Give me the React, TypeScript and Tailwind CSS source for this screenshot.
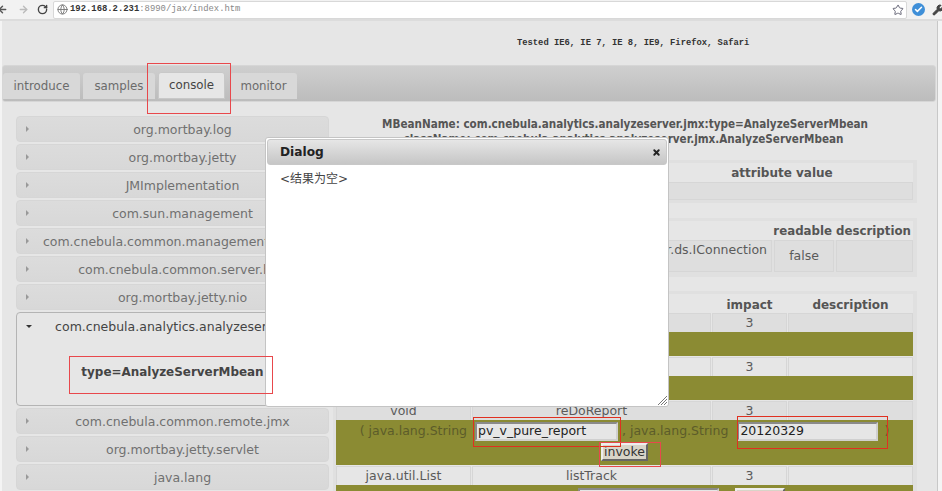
import { ArrowLeft, ArrowRight, Globe, RotateCw, Star, Wrench, X, Check } from 'lucide-react';

const font = { fontFamily: '"DejaVu Sans", "Noto Sans CJK SC", sans-serif' };
const mono = { fontFamily: '"Liberation Mono", monospace' };
const condensed = { fontFamily: '"DejaVu Sans Condensed", "DejaVu Sans", sans-serif' };

const topItems = [
  'org.mortbay.log',
  'org.mortbay.jetty',
  'JMImplementation',
  'com.sun.management',
  'com.cnebula.common.management.monitor',
  'com.cnebula.common.server.hub',
  'org.mortbay.jetty.nio',
];
const bottomItems = ['com.cnebula.common.remote.jmx', 'org.mortbay.jetty.servlet', 'java.lang'];

function Item({ label }: { label: string }) {
  return (
    <div className="flex h-[26px] shrink-0 items-center rounded-[4px] border border-[#d6d6d6] bg-gradient-to-b from-[#dcdcdc] to-[#d8d8d8] pl-[9px] text-[#707070]">
      <span className="h-0 w-0 border-y-[3px] border-l-[3px] border-y-transparent border-l-[#999]" />
      <span className="flex-1 whitespace-nowrap pt-[2px] pl-[8px] text-center">{label}</span>
    </div>
  );
}

function Cell({ children, className = '' }: { children?: React.ReactNode; className?: string }) {
  return (
    <div className={`flex items-center justify-center border border-[#d6d6d6] whitespace-nowrap text-[#5a5a5a] ${className}`}>
      {children}
    </div>
  );
}

function OpRow({ type, name, dark }: { type: string; name: string; dark?: boolean }) {
  const bg = dark ? 'bg-[#dedede]' : 'bg-[#e6e6e6]';
  return (
    <div className="grid h-[18px] grid-cols-[135px_239px_75px_125px] gap-x-[1px]">
      <Cell className={bg}>{type}</Cell>
      <Cell className={bg}>{name}</Cell>
      <Cell className={bg}>3</Cell>
      <Cell className={bg} />
    </div>
  );
}

function Field({ value, className }: { value: string; className: string }) {
  return (
    <div className={`flex h-[19px] items-center border-2 border-[#8a8a8a] border-r-[#d0d0d0] border-b-[#d0d0d0] bg-[#e6e6e6] pl-[1px] text-[#222] ${className}`}>
      {value}
    </div>
  );
}

export default function App() {
  return (
    <div className="relative flex h-[491px] w-[942px] flex-col overflow-hidden bg-[#f4f4f4] text-[12.5px]" style={font}>
      <header className="flex h-[21px] shrink-0 items-center border-b-2 border-[#dcdcdc] bg-[#f2f2f2]">
        <ArrowLeft className="ml-[-3px] h-[11px] w-[11px] shrink-0 text-[#555]" strokeWidth={3} />
        <ArrowRight className="ml-[10px] h-[11px] w-[11px] shrink-0 text-[#bbb]" strokeWidth={3} />
        <RotateCw className="ml-[8px] h-[11px] w-[11px] shrink-0 text-[#444]" strokeWidth={3} />
        <div className="ml-[5px] flex h-[18px] w-[854px] shrink-0 items-center rounded-[2px] border border-[#d8d8d8] bg-white pl-[3px]">
          <Globe className="h-[11px] w-[11px] text-[#777]" />
          <span className="ml-[2px] text-[8.9px] font-bold text-[#333]" style={mono}>
            192.168.2.231<span className="font-normal text-[#888]">:8990/jax/index.htm</span>
          </span>
          <Star className="ml-auto mr-[2px] h-[12px] w-[12px] text-[#667]" />
        </div>
        <div className="ml-[5px] flex h-[13px] w-[13px] shrink-0 items-center justify-center rounded-full bg-[#3f8fd8]">
          <Check className="h-[9px] w-[9px] text-white" strokeWidth={4} />
        </div>
        <Wrench className="ml-[7px] h-[12px] w-[12px] shrink-0 fill-[#444] text-[#444]" />
      </header>

      <div className="flex min-h-0 flex-1">
        <main className="ml-[2px] mr-[4px] flex min-w-0 flex-1 flex-col bg-[#e6e6e6]">
          <p className="h-[44px] shrink-0 pt-[16px] pl-[515px] text-[8.8px] font-bold leading-[12px] text-[#333]" style={mono}>
            Tested IE6, IE 7, IE 8, IE9, Firefox, Safari
          </p>

          <nav className="mr-[2px] flex h-[37px] shrink-0 items-end gap-[3px] rounded-[3px] border border-[#d6d6d6] bg-gradient-to-b from-[#cfcfcf] to-[#bcbcbc] pb-[2px] text-[11.8px] text-[#6b6b6b]">
            <div className="flex h-[26px] w-[77px] items-center justify-center rounded-t-[3px] bg-[#d8d8d8] pt-[1px]">introduce</div>
            <div className="flex h-[26px] w-[72px] items-center justify-center rounded-t-[3px] bg-[#d8d8d8] pt-[1px]">samples</div>
            <div className="flex h-[27px] w-[67px] items-center justify-center rounded-t-[3px] border border-[#c8c8c8] bg-[#e6e6e6] pt-[1px] text-[#444]">console</div>
            <div className="ml-[2px] flex h-[26px] w-[67px] items-center justify-center rounded-t-[3px] bg-[#d8d8d8] pt-[1px]">monitor</div>
          </nav>

          <div className="flex min-h-0 flex-1 gap-[4px] overflow-hidden pt-[14px] pl-[14px]">
            <aside className="flex w-[313px] shrink-0 flex-col gap-[2px]">
              {topItems.map((item) => (
                <Item key={item} label={item} />
              ))}
              <div className="flex h-[94px] shrink-0 flex-col rounded-[4px] border border-[#b4b4b4] bg-[#e6e6e6] text-[#444]">
                <div className="flex h-[26px] items-center pl-[9px]">
                  <span className="h-0 w-0 border-x-[3px] border-t-[3px] border-x-transparent border-t-[#333]" />
                  <span className="flex-1 whitespace-nowrap pt-[2px] pl-[8px] text-center">com.cnebula.analytics.analyzeserver.jmx</span>
                </div>
                <div className="pt-[25px] text-center text-[11.95px] font-bold">type=AnalyzeServerMbean</div>
              </div>
              {bottomItems.map((item) => (
                <Item key={item} label={item} />
              ))}
            </aside>

            <section className="flex w-[584px] shrink-0 flex-col">
              <div className="pt-[1px] text-center text-[11.6px] font-bold leading-[15px] text-[#555]" style={condensed}>
                <div>MBeanName: com.cnebula.analytics.analyzeserver.jmx:type=AnalyzeServerMbean</div>
                <div className="pr-[3px]">className: com.cnebula.analytics.analyzeserver.jmx.AnalyzeServerMbean</div>
              </div>

              <div className="mt-[13px] h-[43px] shrink-0 bg-[#e0e0e0] pt-[3px] pr-[4px] pl-[3px]">
                <div className="flex h-[19px] items-center bg-[#e6e6e6] font-bold text-[#555]">
                  <span className="ml-[315px] flex-1 text-center text-[12px]">attribute value</span>
                </div>
                <div className="h-[18px] border border-[#d6d6d6] bg-[#dedede]" />
              </div>

              <div className="mt-[15px] h-[59px] shrink-0 bg-[#e0e0e0] pt-[3px] pr-[4px] pl-[3px]">
                <div className="flex h-[19px] items-center justify-end gap-[4px] bg-[#e6e6e6] pt-[2px] pr-[2px] text-[11.8px] font-bold text-[#555]">
                  <span>readable</span>
                  <span>description</span>
                </div>
                <div className="grid h-[32px] grid-cols-[1fr_60px_77px] gap-x-[2px]">
                  <div className="border border-[#d6d6d6] bg-[#dedede] pr-[4px] text-right text-[#5a5a5a]">com.cnebula.analyzeserver.ds.IConnection</div>
                  <Cell className="bg-[#dedede] pt-[1px]">false</Cell>
                  <Cell className="bg-[#dedede]" />
                </div>
              </div>

              <div className="mt-[14px] flex-1 bg-[#e0e0e0] pt-[3px] pr-[4px] pl-[3px]">
                <div className="flex w-[577px] flex-col gap-[1px] bg-[#e6e6e6]">
                  <div className="grid h-[18px] grid-cols-[135px_239px_75px_125px] gap-x-[1px] pt-[2px] text-center text-[12px] font-bold leading-[18px] text-[#555]">
                    <span>return</span>
                    <span>operation</span>
                    <span>impact</span>
                    <span>description</span>
                  </div>
                  <OpRow type="void" name="stop" dark />
                  <div className="h-[24px] bg-[#8b8b33]" />
                  <OpRow type="void" name="start" />
                  <div className="h-[24px] bg-[#8b8b33]" />
                  <OpRow type="void" name="reDoReport" dark />
                  <div className="flex h-[45px] flex-col items-center bg-[#8b8b33] pt-[2px] text-[#5c5c2a]">
                    <div className="flex items-center">
                      <span>( java.lang.String</span>
                      <Field value="pv_v_pure_report" className="ml-[8px] w-[143px]" />
                      <span className="ml-[4px]">, java.lang.String</span>
                      <Field value="20120329" className="ml-[9px] w-[141px]" />
                      <span className="ml-[6px]">)</span>
                    </div>
                    <button className="mt-[2px] h-[18px] w-[47px] border-2 border-[#eee] border-r-[#666] border-b-[#666] bg-[#d8d4c8] text-[12.5px] leading-[14px] text-[#333]">
                      invoke
                    </button>
                  </div>
                  <OpRow type="java.util.List" name="listTrack" />
                  <div className="flex h-[30px] items-start bg-[#8b8b33] pt-[3px] pl-[242px]">
                    <div className="h-[19px] w-[141px] border-2 border-[#8a8a8a] border-r-[#d0d0d0] border-b-[#d0d0d0] bg-[#e6e6e6]" />
                    <div className="ml-[16px] h-[18px] w-[50px] border-2 border-[#eee] border-r-[#666] border-b-[#666] bg-[#d8d4c8]" />
                  </div>
                </div>
              </div>
            </section>
          </div>
        </main>
      </div>

      {/* scrollbar edge */}
      <div className="absolute top-[21px] right-[4px] bottom-0 w-[1px] bg-[#c8c8c8]" />

      {/* dialog */}
      <div className="absolute top-[137px] left-[265px] flex h-[270px] w-[404px] flex-col rounded-[3px] border border-[#c4c4c4] bg-white p-[1px]">
        <div className="flex h-[26px] shrink-0 items-center justify-between rounded-[3px] border border-[#c8c8c8] bg-gradient-to-b from-[#e6e6e6] to-[#c6c6c6] pt-[1px] pr-[5px] pl-[12px] text-[12.2px] font-bold text-[#222]">
          <span>Dialog</span>
          <X className="h-[9px] w-[9px] text-[#222]" strokeWidth={5} />
        </div>
        <p className="pt-[6px] pl-[13px] text-[12px] leading-[16px] text-[#444]">&lt;结果为空&gt;</p>
        <svg className="absolute right-[1px] bottom-[1px] h-[9px] w-[9px]" viewBox="0 0 9 9" stroke="#777" strokeWidth="1">
          <path d="M0 9 9 0M3 9l6-6M6 9l3-3" />
        </svg>
      </div>

      {/* red annotation boxes */}
      <div className="absolute top-[63px] left-[147px] h-[51px] w-[84px] border border-[#e8484c]" />
      <div className="absolute top-[356px] left-[69px] h-[38px] w-[204px] border border-[#e8484c]" />
      <div className="absolute top-[417px] left-[473px] h-[30px] w-[148px] border border-[#e03020]" />
      <div className="absolute top-[442px] left-[599px] h-[25px] w-[62px] border border-[#e8484c]" />
      <div className="absolute top-[416px] left-[737px] h-[33px] w-[151px] border border-[#e03020]" />
    </div>
  );
}
